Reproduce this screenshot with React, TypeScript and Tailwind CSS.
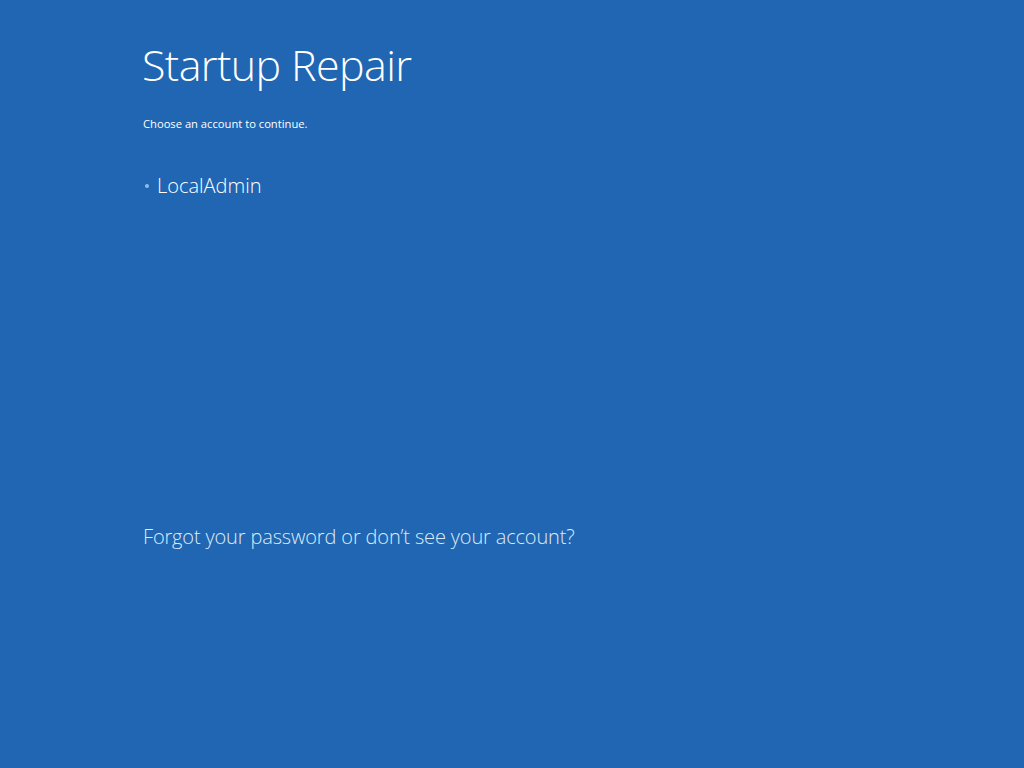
import React from 'react';

const App: React.FC = () => {
  return (
    <div
      className="w-[1024px] h-[768px] bg-[#2066b2] text-white overflow-hidden"
      style={{ fontFamily: '"Open Sans", "Noto Sans", sans-serif' }}
    >
      <div className="pl-[143px] pt-[38px] flex flex-col">
        <h1 className="text-[43px] font-light leading-[54px] tracking-[-0.6px] -ml-[1px]">Startup Repair</h1>
        <p className="mt-[25px] text-[11.2px] leading-[14px]">Choose an account to continue.</p>

        <ul className="mt-[42px]">
          <li className="flex items-center gap-[8px] text-[20px] font-light leading-[26px] -ml-[1px]">
            <span className="w-[4px] h-[4px] rounded-full bg-[#8fbde8] ml-[3px]" />
            <span>LocalAdmin</span>
          </li>
        </ul>

        <p className="mt-[325px] text-[20px] font-light leading-[26px] text-[#dcebfa] tracking-[-0.15px]">
          Forgot your password or don’t see your account?
        </p>
      </div>
    </div>
  );
};

export default App;
